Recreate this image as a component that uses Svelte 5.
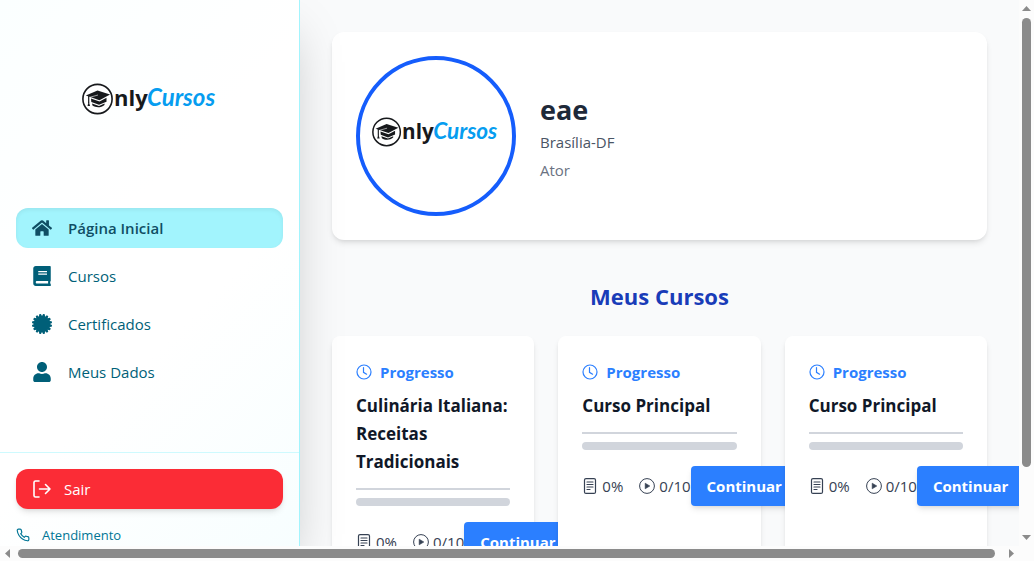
<script>
  const links = [
    { label: 'Página Inicial', icon: 'home', active: true },
    { label: 'Cursos', icon: 'book' },
    { label: 'Certificados', icon: 'certificate' },
    { label: 'Meus Dados', icon: 'user' }
  ];

  const courses = [
    { id: 1, title: 'Culinária Italiana: Receitas Tradicionais', percent: 0, done: 0, total: 10 },
    { id: 2, title: 'Curso Principal', percent: 0, done: 0, total: 10 },
    { id: 3, title: 'Curso Principal', percent: 0, done: 0, total: 10 }
  ];

  const icons = {
    home: {
      box: '0 0 576 512',
      d: 'M280.37 148.26L96 300.11V464a16 16 0 0 0 16 16l112.06-.29a16 16 0 0 0 15.92-16V368a16 16 0 0 1 16-16h64a16 16 0 0 1 16 16v95.64a16 16 0 0 0 16 16.05L464 480a16 16 0 0 0 16-16V300L295.67 148.26a12.19 12.19 0 0 0-15.3 0zM571.6 251.47L488 182.56V44.05a12 12 0 0 0-12-12h-56a12 12 0 0 0-12 12v72.61L318.47 43a48 48 0 0 0-61 0L4.34 251.47a12 12 0 0 0-1.6 16.9l25.5 31A12 12 0 0 0 45.15 301l235.22-193.74a12.19 12.19 0 0 1 15.3 0L530.9 301a12 12 0 0 0 16.9-1.6l25.5-31a12 12 0 0 0-1.7-16.93z'
    },
    book: {
      box: '0 0 448 512',
      d: 'M448 360V24c0-13.300-10.700-24-24-24H64C28 0 0 28 0 64v384c0 36 28 64 64 64h384v-56h-12c-3-15-3-45 0-64h12zM128 134c0-3.300 2.700-6 6-6h212c3.300 0 6 2.700 6 6v20c0 3.300-2.700 6-6 6H134c-3.300 0-6-2.700-6-6v-20zm0 64c0-3.300 2.700-6 6-6h212c3.300 0 6 2.700 6 6v20c0 3.300-2.700 6-6 6H134c-3.300 0-6-2.700-6-6v-20zm253.400 250H96c-17.700 0-32-14.300-32-32 0-17.600 14.400-32 32-32h285.400c-1.900 17.100-1.900 46.900 0 64z'
    },
    certificate: { box: '0 0 512 512', d: seal(16, 258, 204) },
    user: {
      box: '0 0 448 512',
      d: 'M224 256c70.7 0 128-57.3 128-128S294.7 0 224 0 96 57.3 96 128s57.3 128 128 128zm89.6 32h-16.7c-22.2 10.2-46.9 16-72.9 16s-50.6-5.8-72.9-16h-16.7C60.2 288 0 348.2 0 422.4V464c0 26.5 21.5 48 48 48h352c26.5 0 48-21.5 48-48v-41.6c0-74.2-60.2-134.4-134.4-134.4z'
    }
  };

  // Toothed seal outline: flat-topped teeth around a disc.
  function seal(teeth, outer, inner) {
    const points = [];
    const step = (Math.PI * 2) / teeth;
    for (let i = 0; i < teeth; i++) {
      const mid = (i + 0.5) * step;
      for (const [offset, radius] of [[-0.22, outer], [0.22, outer], [0.5, inner]]) {
        const a = mid + offset * step;
        points.push(`${(256 + radius * Math.sin(a)).toFixed(1)} ${(256 - radius * Math.cos(a)).toFixed(1)}`);
      }
    }
    return `M${points.join('L')}Z`;
  }
</script>

{#snippet logo()}
  <svg class="logo" viewBox="0 0 136 36" role="img" aria-label="OnlyCursos">
    <circle cx="15.500" cy="18" r="14.600" fill="#fff" stroke="#17191c" stroke-width="1.600" />
    <path d="M3.800 14.500 15.500 9.500 28 13.500 17.500 19.200Z" fill="#17191c" />
    <path d="M9 17.500 17.500 20.500 24.500 16.800v4L17 23.800 9.300 21Z" fill="#17191c" />
    <path d="M10 22.600 17 25 22.500 22.500v1.500c-3.500 3-8.500 3-12 .6Z" fill="#17191c" />
    <path d="M16 14 7.800 16.300V21" fill="none" stroke="#fff" stroke-width=".6" />
    <path d="M6.700 15v7" fill="none" stroke="#17191c" stroke-width="1.200" />
    <path d="m6.700 20.500-1.200 4.500h2.600Z" fill="#17191c" />
    <text x="32" y="25" class="logo-dark">nly</text>
    <text x="65" y="25" class="logo-blue">Cursos</text>
  </svg>
{/snippet}

<div class="window">
  <div class="viewport">
    <aside class="sidebar">
      <div class="brand">{@render logo()}</div>
      <nav class="nav">
        {#each links as link}
          <a href="#{link.icon}" class="nav-link" class:active={link.active}>
            <svg viewBox={icons[link.icon].box} aria-hidden="true"><path d={icons[link.icon].d} fill="currentColor" /></svg>
            <span>{link.label}</span>
          </a>
        {/each}
      </nav>
      <div class="side-foot">
        <button class="logout" type="button">
          <svg viewBox="0 0 20 20" aria-hidden="true" fill="none" stroke="currentColor" stroke-width="1.600" stroke-linecap="round" stroke-linejoin="round">
            <path d="M7 2H3.500A1.500 1.500 0 0 0 2 3.500v13A1.500 1.500 0 0 0 3.500 18H7M7.500 10H18M13.500 5.500 18 10l-4.500 4.500" />
          </svg>
          Sair
        </button>
        <a class="support" href="#atendimento">
          <svg viewBox="0 0 24 24" aria-hidden="true" fill="none" stroke="currentColor" stroke-width="2" stroke-linecap="round" stroke-linejoin="round">
            <path d="M22 16.920v3a2 2 0 0 1-2.180 2 19.790 19.790 0 0 1-8.630-3.070 19.500 19.500 0 0 1-6-6 19.790 19.790 0 0 1-3.070-8.670A2 2 0 0 1 4.110 2h3a2 2 0 0 1 2 1.720 12.840 12.840 0 0 0 .7 2.810 2 2 0 0 1-.45 2.110L8.090 9.910a16 16 0 0 0 6 6l1.270-1.270a2 2 0 0 1 2.110-.45 12.840 12.840 0 0 0 2.810.7A2 2 0 0 1 22 16.920z" />
          </svg>
          Atendimento
        </a>
      </div>
    </aside>

    <main class="content">
      <section class="profile">
        <div class="avatar">{@render logo()}</div>
        <div class="about">
          <h1>eae</h1>
          <p class="place">Brasília-DF</p>
          <p class="role">Ator</p>
        </div>
      </section>

      <h2>Meus Cursos</h2>

      <div class="courses">
        {#each courses as course (course.id)}
          <article class="course">
            <div class="status">
              <svg viewBox="0 0 16 16" aria-hidden="true" fill="none" stroke="currentColor" stroke-width="1.200" stroke-linecap="round">
                <circle cx="8" cy="8" r="7" /><path d="M7.500 3.500V8.300L10.600 10.200" />
              </svg>
              Progresso
            </div>
            <h3>{course.title}</h3>
            <div class="rule"></div>
            <div class="track"><div class="fill" style="width: {course.percent}%"></div></div>
            <div class="course-foot">
              <div class="stats">
                <span class="stat">
                  <svg viewBox="0 0 16 16" aria-hidden="true" fill="none" stroke="currentColor" stroke-width="1.200" stroke-linecap="round">
                    <rect x="2.500" y=".6" width="11" height="14.800" rx="1.500" /><path d="M5 4h6M5 6.500h6M5 9h6M5 11.500h3" />
                  </svg>
                  {course.percent}%
                </span>
                <span class="stat">
                  <svg viewBox="0 0 16 16" aria-hidden="true">
                    <circle cx="8" cy="8" r="7.400" fill="none" stroke="currentColor" /><path d="M6.200 5.200v5.600L10.800 8Z" fill="currentColor" stroke="currentColor" stroke-width=".6" stroke-linejoin="round" />
                  </svg>
                  {course.done}/{course.total}
                </span>
              </div>
              <button class="continue" type="button">Continuar</button>
            </div>
          </article>
        {/each}
      </div>
    </main>
  </div>

  <div class="bar vertical" aria-hidden="true">
    <svg viewBox="0 0 15 15"><path d="M7.500 6 12 11H3Z" /></svg>
    <div class="lane"><div class="thumb"></div></div>
    <svg viewBox="0 0 15 15"><path d="M7.500 9 12 4H3Z" /></svg>
  </div>
  <div class="bar horizontal" aria-hidden="true">
    <svg viewBox="0 0 15 15"><path d="M5 7.500 10 3v9Z" /></svg>
    <div class="lane"><div class="thumb"></div></div>
    <svg viewBox="0 0 15 15"><path d="M10 7.500 5 3v9Z" /></svg>
  </div>
  <div class="corner"></div>
</div>

<style>
  :global(body) {
    margin: 0;
    overflow: hidden;
    font-family: 'Segoe UI', 'Open Sans', 'Noto Sans', sans-serif;
    font-size: 15px;
    line-height: 24px;
    color: #101828;
  }
  * { box-sizing: border-box; }
  h1, h2, h3, p { margin: 0; }
  a { text-decoration: none; }
  svg { display: block; flex: none; }
  button { font: inherit; border: 0; cursor: pointer; }

  .window {
    display: grid;
    grid-template: minmax(0, 1fr) 15px / minmax(0, 1fr) 15px;
    height: 100vh;
  }
  .viewport {
    display: grid;
    grid-template: minmax(0, 1fr) / 300px minmax(0, 1fr);
    overflow: hidden;
    background: #f9fafb;
  }

  .sidebar {
    position: relative;
    z-index: 5;
    display: flex;
    flex-direction: column;
    min-height: 0;
    border-right: 1px solid #a2f4fd;
    background: linear-gradient(135deg, #fbffff, #fff 40%, #fff 60%, #f7feff);
    box-shadow: 0 25px 50px -12px rgb(0 0 0 / 25%);
  }
  .brand {
    display: grid;
    place-items: center;
    flex: none;
    height: 192px;
    padding-top: 6px;
  }
  .brand .logo { width: 136px; }
  .logo-dark { font: 700 22px 'Open Sans', sans-serif; fill: #17191c; }
  .logo-blue { font: italic 700 24px Lato, sans-serif; fill: #069df0; }

  .nav {
    display: flex;
    flex: 1;
    flex-direction: column;
    gap: 8px;
    min-height: 0;
    padding: 16px;
  }
  .nav-link {
    display: flex;
    align-items: center;
    gap: 16px;
    padding: 8px 16px;
    border-radius: 12px;
    color: #005f78;
  }
  .nav-link svg { width: 20px; height: 20px; }
  .nav-link.active {
    background: #a2f4fd;
    box-shadow: inset 0 2px 4px rgb(0 0 0 / 6%);
    color: #104e64;
    font-weight: 600;
  }

  .side-foot {
    display: flex;
    flex: none;
    flex-direction: column;
    gap: 16px;
    height: 94px;
    padding: 16px 16px 0;
    border-top: 1px solid #cefafe;
  }
  .logout {
    display: flex;
    flex: none;
    align-items: center;
    gap: 12px;
    height: 40px;
    padding: 8px 16px;
    border-radius: 12px;
    background: #fb2c36;
    box-shadow: 0 4px 6px -1px rgb(0 0 0 / 10%), 0 2px 4px -2px rgb(0 0 0 / 10%);
    color: #fff;
    font-weight: 500;
  }
  .logout svg { width: 20px; height: 20px; }
  .support {
    display: flex;
    align-items: center;
    gap: 12px;
    color: #007595;
    font-size: 13px;
    line-height: 20px;
  }
  .support svg { width: 14px; height: 14px; }

  .content {
    min-width: 0;
    padding: 32px;
  }
  .profile {
    display: flex;
    align-items: center;
    gap: 24px;
    padding: 24px;
    border-radius: 12px;
    background: #fff;
    box-shadow: 0 4px 6px -1px rgb(0 0 0 / 10%), 0 2px 4px -2px rgb(0 0 0 / 10%);
  }
  .avatar {
    display: grid;
    place-items: center;
    flex: none;
    width: 160px;
    height: 160px;
    padding-bottom: 8px;
    border: 4px solid #155dfc;
    border-radius: 50%;
  }
  .avatar .logo { width: 128px; }
  h1 {
    color: #1e2939;
    font-size: 27px;
    line-height: 36px;
  }
  .about { display: grid; padding-top: 4px; }
  .place { color: #4a5565; line-height: 28px; }
  .role { color: #6a7282; line-height: 28px; }

  h2 {
    margin: 40px 0 24px;
    color: #193cb8;
    font-size: 22px;
    line-height: 32px;
    text-align: center;
  }
  .courses {
    display: grid;
    grid-template-columns: repeat(3, minmax(0, 1fr));
    gap: 24px;
  }
  .course {
    position: relative;
    min-height: 260px;
    padding: 24px;
    border-radius: 8px;
    background: #fff;
    box-shadow: 0 4px 6px -1px rgb(0 0 0 / 10%), 0 2px 4px -2px rgb(0 0 0 / 10%);
  }
  .status {
    display: flex;
    align-items: center;
    gap: 8px;
    margin-bottom: 8px;
    color: #2b7fff;
    font-weight: 700;
  }
  .status svg { width: 16px; height: 16px; }
  h3 {
    font-size: 17px;
    font-weight: 700;
    line-height: 28px;
  }
  .rule {
    height: 2px;
    margin: 12px 0 8px;
    background: #d1d5dc;
  }
  .track {
    height: 8px;
    overflow: hidden;
    border-radius: 4px;
    background: #d1d5dc;
  }
  .fill { height: 100%; background: #2b7fff; }
  .course-foot {
    display: flex;
    align-items: center;
    margin-top: 16px;
  }
  .stats {
    display: flex;
    flex: none;
    gap: 16px;
    color: #364153;
  }
  .stat {
    display: flex;
    align-items: center;
    gap: 4px;
  }
  .stat svg { width: 16px; height: 16px; }
  .continue {
    flex: none;
    padding: 8px 16px;
    border-radius: 4px;
    background: #2b7fff;
    box-shadow: 0 4px 6px -1px rgb(0 0 0 / 10%), 0 2px 4px -2px rgb(0 0 0 / 10%);
    color: #fff;
    font-weight: 700;
  }

  .bar { display: flex; background: #fcfcfc; }
  .bar svg { width: 15px; height: 15px; fill: #8b8b8b; }
  .lane { display: flex; flex: 1; padding: 3px; }
  .thumb { border-radius: 5px; background: #8b8b8b; }
  .vertical { flex-direction: column; }
  .vertical .lane { flex-direction: column; }
  .vertical .thumb { height: 88%; }
  .horizontal .thumb { width: 100%; }
  .horizontal .lane { padding-right: 9px; }
  .corner { background: #fcfcfc; }
</style>
